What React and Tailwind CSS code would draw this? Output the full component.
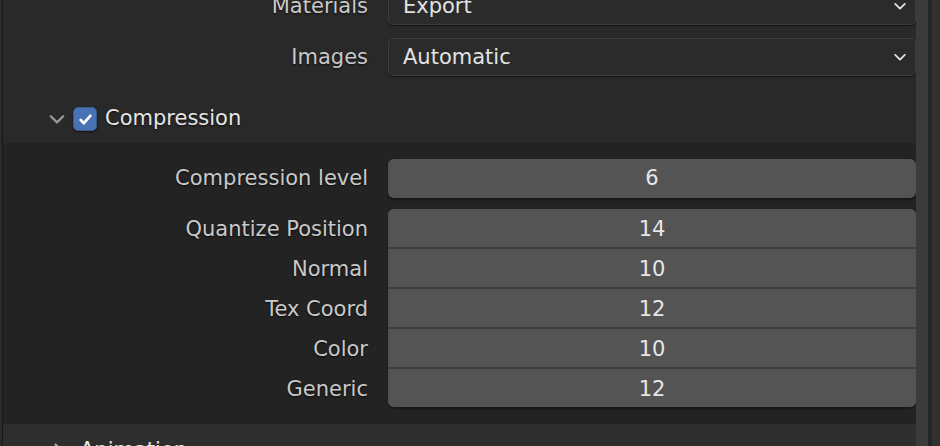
import React from 'react';

const font = { fontFamily: '"DejaVu Sans", "Liberation Sans", sans-serif' };

const Chevron = ({ className = '', dir = 'down' }) => (
  <svg viewBox="0 0 16 16" className={className} fill="none" stroke="currentColor" strokeWidth="2" strokeLinecap="round" strokeLinejoin="round">
    {dir === 'down' ? <path d="M2.5 5.5 8 11l5.5-5.5" /> : <path d="M5.5 2.5 11 8l-5.5 5.5" />}
  </svg>
);

const Label = ({ children }) => (
  <div className="w-[365px] shrink-0 text-right text-[21px] text-[#c9c9c9] [text-shadow:0_1px_2px_rgba(0,0,0,0.7)]">
    {children}
  </div>
);

const Dropdown = ({ label, value, extra = '' }) => (
  <div className={`shrink-0 flex items-center gap-[20px] h-[38px] pt-[2px] ${extra}`}>
    <Label>{label}</Label>
    <div className="w-[528px] h-[38px] -mt-[2px] flex items-center justify-between rounded-[5px] border border-[#3d3d3d] bg-[#2b2b2b] pl-[14px] pr-[8px] pt-[2px] shadow-[0_1px_1px_rgba(0,0,0,0.5)]">
      <span className="text-[21px] text-[#e2e2e2]">{value}</span>
      <Chevron className="w-[14px] h-[14px] -mt-[2px] text-[#e6e6e6]" />
    </div>
  </div>
);

const rows = [
  ['Quantize Position', 14],
  ['Normal', 10],
  ['Tex Coord', 12],
  ['Color', 10],
  ['Generic', 12],
];

export default function App() {
  return (
    <div className="w-[940px] h-[446px] overflow-hidden flex bg-[#292929] select-none" style={font}>
      {/* left edge */}
      <div className="w-[3px] flex">
        <div className="w-[2px] bg-[#2b2b2b]" />
        <div className="w-[1px] bg-[#181818]" />
      </div>

      {/* main panel */}
      <div className="w-[913px] flex flex-col">
        <div className="h-[143px] shrink-0 flex flex-col gap-[13px]">
          <Dropdown label="Materials" value="Export" extra="-mt-[13px]" />
          <Dropdown label="Images" value="Automatic" />
          <div className="shrink-0 h-[38px] mt-[11px] flex items-center pl-[45px]">
            <Chevron className="w-[18px] h-[18px] text-[#9a9a9a]" />
            <div className="ml-[7px] w-[24px] h-[24px] rounded-[5px] bg-[#4772b3] border border-[#3a5a8c] flex items-center justify-center shadow-[0_1px_2px_rgba(0,0,0,0.6)]">
              <svg viewBox="0 0 16 16" className="w-[17px] h-[17px]" fill="none" stroke="#fff" strokeWidth="2.6" strokeLinecap="round" strokeLinejoin="round">
                <path d="M3.5 8.5 6.5 11.5 12.5 4.5" />
              </svg>
            </div>
            <span className="ml-[8px] text-[21px] text-[#e6e6e6] [text-shadow:0_1px_2px_rgba(0,0,0,0.7)]">Compression</span>
          </div>
        </div>

        {/* subpanel body */}
        <div className="h-[281px] shrink-0 bg-[#232323] pt-[16px] flex flex-col">
          <div className="shrink-0 flex items-center gap-[20px] h-[39px]">
            <Label>Compression level</Label>
            <div className="w-[528px] h-full rounded-[6px] bg-[#545454] flex items-center justify-center text-[21px] text-[#e6e6e6] shadow-[0_2px_2px_rgba(0,0,0,0.35)]">
              6
            </div>
          </div>

          <div className="shrink-0 flex gap-[20px] mt-[11px]">
            <div className="flex flex-col">
              {rows.map(([name], i) => (
                <div key={name} className={`h-[38px] pt-[3px] flex items-center ${i > 0 ? 'mt-[2px]' : ''}`}>
                  <Label>{name}</Label>
                </div>
              ))}
            </div>
            <div className="w-[528px] flex flex-col rounded-[6px] overflow-hidden bg-[#3e3e3e] shadow-[0_2px_2px_rgba(0,0,0,0.35)]">
              {rows.map(([name, v], i) => (
                <div key={name} className={`h-[38px] pt-[3px] bg-[#545454] flex items-center justify-center text-[21px] text-[#e6e6e6] ${i > 0 ? 'mt-[2px]' : ''}`}>
                  {v}
                </div>
              ))}
            </div>
          </div>
        </div>

        {/* next panel header */}
        <div className="flex-1 bg-[#2e2e2e] flex items-start pl-[47px] pt-[14px]">
          <Chevron dir="right" className="w-[16px] h-[16px] mt-[4px] text-[#b0b0b0]" />
          <span className="ml-[14px] text-[21px] leading-[24px] text-[#e6e6e6]">Animation</span>
        </div>
      </div>

      {/* right region bars */}
      <div className="w-[12px] bg-[#3b3b3b]" />
      <div className="w-[4px] bg-[#252525]" />
      <div className="flex-1 bg-[#313131]" />
    </div>
  );
}
